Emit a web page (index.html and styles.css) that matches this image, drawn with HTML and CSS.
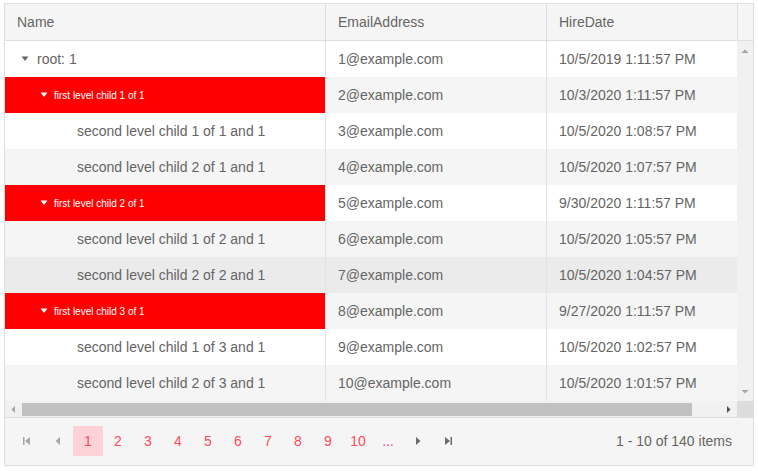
FILE: index.html
```html
<!DOCTYPE html>
<html>
<head>
<meta charset="utf-8">
<link rel="stylesheet" href="styles.css">
</head>
<body>
<div class="grid">
  <div class="thead">
    <div class="th c-name">Name</div>
    <div class="th c-email">EmailAddress</div>
    <div class="th c-date">HireDate</div>
    <div class="th c-spacer"></div>
  </div>
  <div class="body">
    <div class="rows">
      <div class="row">
        <div class="td c-name lvl0"><svg class="tog" viewBox="0 0 16 16"><polygon points="3.5,5.5 10.5,5.5 7,10" fill="#656565"/></svg>root: 1</div>
        <div class="td c-email">1@example.com</div>
        <div class="td c-date">10/5/2019 1:11:57 PM</div>
      </div>
      <div class="row alt">
        <div class="td c-name lvl1"><svg class="tog" viewBox="0 0 16 16"><polygon points="3.5,5.5 10.5,5.5 7,10" fill="#fff"/></svg>first level child 1 of 1</div>
        <div class="td c-email">2@example.com</div>
        <div class="td c-date">10/3/2020 1:11:57 PM</div>
      </div>
      <div class="row">
        <div class="td c-name lvl2">second level child 1 of 1 and 1</div>
        <div class="td c-email">3@example.com</div>
        <div class="td c-date">10/5/2020 1:08:57 PM</div>
      </div>
      <div class="row alt">
        <div class="td c-name lvl2">second level child 2 of 1 and 1</div>
        <div class="td c-email">4@example.com</div>
        <div class="td c-date">10/5/2020 1:07:57 PM</div>
      </div>
      <div class="row">
        <div class="td c-name lvl1"><svg class="tog" viewBox="0 0 16 16"><polygon points="3.5,5.5 10.5,5.5 7,10" fill="#fff"/></svg>first level child 2 of 1</div>
        <div class="td c-email">5@example.com</div>
        <div class="td c-date">9/30/2020 1:11:57 PM</div>
      </div>
      <div class="row alt">
        <div class="td c-name lvl2">second level child 1 of 2 and 1</div>
        <div class="td c-email">6@example.com</div>
        <div class="td c-date">10/5/2020 1:05:57 PM</div>
      </div>
      <div class="row hover">
        <div class="td c-name lvl2">second level child 2 of 2 and 1</div>
        <div class="td c-email">7@example.com</div>
        <div class="td c-date">10/5/2020 1:04:57 PM</div>
      </div>
      <div class="row alt">
        <div class="td c-name lvl1"><svg class="tog" viewBox="0 0 16 16"><polygon points="3.5,5.5 10.5,5.5 7,10" fill="#fff"/></svg>first level child 3 of 1</div>
        <div class="td c-email">8@example.com</div>
        <div class="td c-date">9/27/2020 1:11:57 PM</div>
      </div>
      <div class="row">
        <div class="td c-name lvl2">second level child 1 of 3 and 1</div>
        <div class="td c-email">9@example.com</div>
        <div class="td c-date">10/5/2020 1:02:57 PM</div>
      </div>
      <div class="row alt">
        <div class="td c-name lvl2">second level child 2 of 3 and 1</div>
        <div class="td c-email">10@example.com</div>
        <div class="td c-date">10/5/2020 1:01:57 PM</div>
      </div>
    </div>
    <div class="vscroll">
      <svg class="sarrow" viewBox="0 0 16 16"><polygon points="4.5,11 11.5,11 8,7.5" fill="#a3a3a3"/></svg>
      <svg class="sarrow" viewBox="0 0 16 16"><polygon points="4.5,6 11.5,6 8,9.5" fill="#a3a3a3"/></svg>
    </div>
  </div>
  <div class="hscroll">
    <div class="htrack">
      <svg class="harrow" viewBox="0 0 17 17"><polygon points="10,5 10,12 6.5,8.5" fill="#a3a3a3"/></svg>
      <div class="hthumb-wrap"><div class="hthumb"></div></div>
      <svg class="harrow" viewBox="0 0 17 17"><polygon points="7,5 7,12 10.5,8.5" fill="#505050"/></svg>
    </div>
    <div class="corner"></div>
  </div>
  <div class="pager">
    <div class="pages">
      <span class="pbtn"><svg viewBox="0 0 30 30"><rect x="10" y="11" width="1.5" height="8" fill="#a8a8a8"/><polygon points="17,11 17,19 12,15" fill="#a8a8a8"/></svg></span>
      <span class="pbtn"><svg viewBox="0 0 30 30"><polygon points="17,11 17,19 12.5,15" fill="#a8a8a8"/></svg></span>
      <span class="pnum sel">1</span>
      <span class="pnum">2</span>
      <span class="pnum">3</span>
      <span class="pnum">4</span>
      <span class="pnum">5</span>
      <span class="pnum">6</span>
      <span class="pnum">7</span>
      <span class="pnum">8</span>
      <span class="pnum">9</span>
      <span class="pnum">10</span>
      <span class="pnum">...</span>
      <span class="pbtn"><svg viewBox="0 0 30 30"><polygon points="13,11 13,19 17.5,15" fill="#6b6b6b"/></svg></span>
      <span class="pbtn"><svg viewBox="0 0 30 30"><polygon points="12,11 12,19 17,15" fill="#6b6b6b"/><rect x="17.5" y="11" width="1.5" height="8" fill="#6b6b6b"/></svg></span>
    </div>
    <div class="info">1 - 10 of 140 items</div>
  </div>
</div>
</body>
</html>
```

FILE: styles.css
```css
* { box-sizing: border-box; }
html, body { margin: 0; padding: 0; background: #fff; }
body {
  font-family: "Liberation Sans", Arial, sans-serif;
  font-size: 14px;
  color: #656565;
  padding: 3px 0 0 4px;
}
.grid {
  width: 750px;
  border: 1px solid #dedede;
  display: flex;
  flex-direction: column;
}
.thead {
  display: flex;
  height: 37px;
  background: #f5f5f5;
  border-bottom: 1px solid #dedede;
}
.th {
  display: flex;
  align-items: center;
  padding-left: 12px;
  padding-bottom: 1px;
  white-space: nowrap;
}
.c-name { width: 320px; }
.c-email { width: 221px; border-left: 1px solid #dedede; }
.c-date { width: 191px; border-left: 1px solid #dedede; }
.c-spacer { width: 16px; padding: 0; border-left: 1px solid #dedede; }

.body { display: flex; height: 360px; }
.rows { width: 732px; display: flex; flex-direction: column; }
.row { display: flex; height: 36px; background: #fff; }
.row.alt { background: #f5f5f5; }
.row.hover { background: #ebebeb; }
.td {
  display: flex;
  align-items: center;
  padding-left: 12px;
  white-space: nowrap;
  overflow: hidden;
}
.td.c-email, .td.c-date { border-left-color: #e3e3e3; }
.tog { width: 16px; height: 16px; flex: none; }
.lvl0 .tog { margin-left: 1px; margin-right: 3px; }
.lvl1 {
  background: #ff0000;
  color: #fff;
  font-size: 10px;
  padding-left: 32px;
}
.lvl1 .tog { margin-right: 1px; }
.lvl2 { padding-left: 72px; }

.vscroll {
  width: 16px;
  background: #f1f1f1;
  display: flex;
  flex-direction: column;
  justify-content: space-between;
  padding: 1px 0 1px 0;
}
.sarrow { width: 16px; height: 16px; display: block; }

.hscroll { display: flex; height: 17px; border-bottom: 1px solid #dedede; }
.htrack { width: 732px; background: #f1f1f1; display: flex; align-items: center; }
.harrow { width: 17px; height: 17px; flex: none; }
.hthumb-wrap { flex: 1; display: flex; align-items: center; height: 17px; }
.hthumb { width: 670px; height: 13px; background: #c1c1c1; }
.corner { width: 16px; background: #dcdcdc; }

.pager {
  height: 47px;
  background: #f5f5f5;
  display: flex;
  align-items: center;
  justify-content: space-between;
  padding: 0 21px 1px 8px;
}
.pages { display: flex; align-items: center; }
.pbtn, .pnum {
  width: 30px;
  height: 30px;
  display: flex;
  align-items: center;
  justify-content: center;
}
.pbtn svg { width: 30px; height: 30px; display: block; }
.pnum { color: #ff4a5c; font-size: 14px; }
.pnum.sel { background: #fdd3d8; }
.info { font-size: 14px; color: #656565; }
```
